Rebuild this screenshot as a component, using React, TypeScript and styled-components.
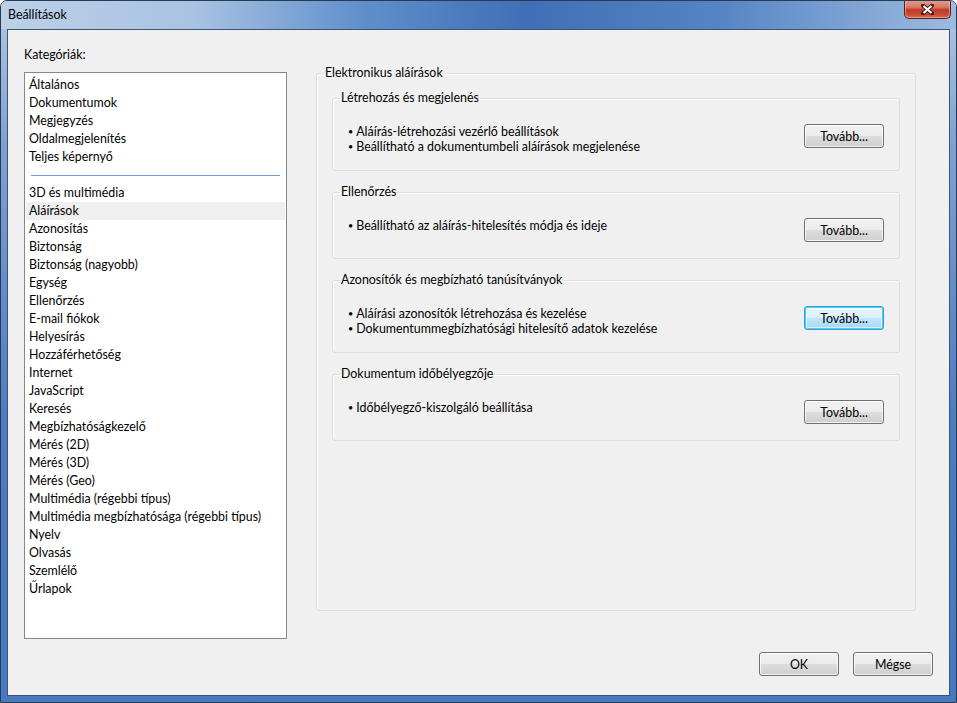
import React from 'react';
import styled, { createGlobalStyle } from 'styled-components';

const Global = createGlobalStyle`
  html, body {
    margin: 0;
    padding: 0;
    background: #ffffff;
  }
  body {
    font-family: Lato, "Liberation Sans", sans-serif;
    font-size: 12.4px;
    color: #000;
  }
`;

const Window = styled.div`
  width: 957px;
  height: 703px;
  box-sizing: border-box;
  display: flex;
  flex-direction: column;
  border: 1px solid #2a3a50;
  border-radius: 7px 7px 0 0;
  overflow: hidden;
  background: linear-gradient(180deg, #b3c9e4 0%, #7fa2d2 20%, #4c7cc1 60%, #4679c0 100%);
`;

const TitleBar = styled.div`
  height: 28px;
  flex: none;
  display: flex;
  align-items: flex-start;
  justify-content: space-between;
  padding-left: 7px;
  background: linear-gradient(90deg, #bcd0e8 0%, #a9c3e3 20%, #5f8fcb 38%, #3f6fb6 55%, #5584c4 75%, #9dbbe0 100%);
`;

const Title = styled.span`
  line-height: 28px;
  color: #000;
`;

const CloseButton = styled.div`
  width: 47px;
  height: 19px;
  margin-right: 5px;
  margin-top: -1px;
  box-sizing: border-box;
  border: 1px solid #5b2219;
  border-top: none;
  border-radius: 0 0 5px 5px;
  background: linear-gradient(180deg, #e3a090 0%, #d47864 40%, #c23a24 55%, #c84a33 80%, #d86f58 100%);
  box-shadow: inset 0 0 0 1px rgba(255, 210, 200, 0.45);
  display: flex;
  align-items: center;
  justify-content: center;
`;

const Client = styled.div`
  flex: 1;
  margin: 0 6px 6px;
  border: 1px solid #3e5473;
  background: #f0f0f0;
  padding: 17px 16px 17px 16px;
  display: flex;
  flex-direction: column;
`;

const TopRow = styled.div`
  display: flex;
  align-items: flex-start;
`;

const LeftColumn = styled.div`
  width: 263px;
  display: flex;
  flex-direction: column;
`;

const Label = styled.div`
  line-height: 16px;
  margin-bottom: 9px;
`;

const ListBox = styled.div`
  height: 567px;
  box-sizing: border-box;
  border: 1px solid #828790;
  background: #fff;
  padding: 3px 1px;
`;

const ListItem = styled.div<{ $selected?: boolean }>`
  height: 18px;
  line-height: 18px;
  padding-left: 3px;
  background: ${(p) => (p.$selected ? '#efefef' : 'transparent')};
  white-space: nowrap;
`;

const Separator = styled.div`
  height: 18px;
  display: flex;
  align-items: center;
  padding: 0 5px;
  &::after {
    content: '';
    flex: 1;
    height: 1px;
    background: #6f9fd6;
  }
`;

const RightColumn = styled.div`
  width: 600px;
  margin-left: 29px;
  margin-top: 18px;
`;

const Group = styled.fieldset<{ $outer?: boolean }>`
  margin: 0;
  min-width: 0;
  box-sizing: border-box;
  border: 1px solid #d5dfe5;
  border-radius: 3px;
  box-shadow: inset 1px 1px 0 #fff;
  padding: ${(p) => (p.$outer ? '9px 15px 0' : '18px 15px 16px')};
  height: ${(p) => (p.$outer ? '546px' : 'auto')};
  & + & {
    margin-top: 13px;
  }
`;

const Legend = styled.legend`
  padding: 0 1px;
  margin-left: -8px;
  line-height: 16px;
`;

const GroupBody = styled.div`
  display: flex;
  justify-content: space-between;
  align-items: flex-start;
`;

const Bullets = styled.ul`
  list-style: none;
  margin: 0;
  padding: 0;
  line-height: 15px;
`;

const Dot = styled.span`
  font-size: 9px;
  margin-right: 3px;
  vertical-align: 1px;
`;

const Button = styled.button<{ $focused?: boolean }>`
  width: 80px;
  height: 24px;
  box-sizing: border-box;
  font-family: inherit;
  font-size: 12.4px;
  color: #000;
  padding: 0;
  border-radius: 3px;
  border: 1px solid ${(p) => (p.$focused ? '#3c9ad6' : '#707070')};
  background: ${(p) =>
    p.$focused
      ? 'linear-gradient(180deg, #eaf6fd 0%, #d9f0fc 50%, #bee6fd 51%, #a7d9f5 100%)'
      : 'linear-gradient(180deg, #f2f2f2 0%, #ebebeb 50%, #dddddd 51%, #cfcfcf 100%)'};
  box-shadow: ${(p) =>
    p.$focused ? 'inset 0 0 0 1px #48d2f8, inset 0 0 0 2px rgba(255,255,255,0.5)' : 'inset 0 0 0 1px rgba(255,255,255,0.75)'};
`;

const ButtonRow = styled.div`
  margin-top: 13px;
  display: flex;
  justify-content: flex-end;
  gap: 14px;
`;

const categories = [
  'Általános',
  'Dokumentumok',
  'Megjegyzés',
  'Oldalmegjelenítés',
  'Teljes képernyő',
  '-',
  '3D és multimédia',
  'Aláírások',
  'Azonosítás',
  'Biztonság',
  'Biztonság (nagyobb)',
  'Egység',
  'Ellenőrzés',
  'E-mail fiókok',
  'Helyesírás',
  'Hozzáférhetőség',
  'Internet',
  'JavaScript',
  'Keresés',
  'Megbízhatóságkezelő',
  'Mérés (2D)',
  'Mérés (3D)',
  'Mérés (Geo)',
  'Multimédia (régebbi típus)',
  'Multimédia megbízhatósága (régebbi típus)',
  'Nyelv',
  'Olvasás',
  'Szemlélő',
  'Űrlapok',
];

const sections = [
  {
    title: 'Létrehozás és megjelenés',
    lines: ['Aláírás-létrehozási vezérlő beállítások', 'Beállítható a dokumentumbeli aláírások megjelenése'],
  },
  { title: 'Ellenőrzés', lines: ['Beállítható az aláírás-hitelesítés módja és ideje'] },
  {
    title: 'Azonosítók és megbízható tanúsítványok',
    lines: ['Aláírási azonosítók létrehozása és kezelése', 'Dokumentummegbízhatósági hitelesítő adatok kezelése'],
    focused: true,
  },
  { title: 'Dokumentum időbélyegzője', lines: ['Időbélyegző-kiszolgáló beállítása'] },
];

function CloseGlyph() {
  return (
    <svg width="13" height="11" viewBox="0 0 13 11">
      <path d="M2 1.5 L11 9.5 M11 1.5 L2 9.5" stroke="#4a1a14" strokeWidth="4" strokeLinecap="square" />
      <path d="M2.5 2 L10.5 9 M10.5 2 L2.5 9" stroke="#ffffff" strokeWidth="2.2" strokeLinecap="butt" />
    </svg>
  );
}

export default function App() {
  return (
    <>
      <Global />
      <Window>
        <TitleBar>
          <Title>Beállítások</Title>
          <CloseButton>
            <CloseGlyph />
          </CloseButton>
        </TitleBar>
        <Client>
          <TopRow>
            <LeftColumn>
              <Label>Kategóriák:</Label>
              <ListBox>
                {categories.map((c, i) =>
                  c === '-' ? (
                    <Separator key={i} />
                  ) : (
                    <ListItem key={i} $selected={c === 'Aláírások'}>
                      {c}
                    </ListItem>
                  )
                )}
              </ListBox>
            </LeftColumn>
            <RightColumn>
              <Group $outer>
                <Legend>Elektronikus aláírások</Legend>
                {sections.map((s) => (
                  <Group key={s.title}>
                    <Legend>{s.title}</Legend>
                    <GroupBody>
                      <Bullets>
                        {s.lines.map((l) => (
                          <li key={l}>
                            <Dot>•</Dot>
                            {l}
                          </li>
                        ))}
                      </Bullets>
                      <Button $focused={s.focused}>Tovább...</Button>
                    </GroupBody>
                  </Group>
                ))}
              </Group>
            </RightColumn>
          </TopRow>
          <ButtonRow>
            <Button>OK</Button>
            <Button>Mégse</Button>
          </ButtonRow>
        </Client>
      </Window>
    </>
  );
}
